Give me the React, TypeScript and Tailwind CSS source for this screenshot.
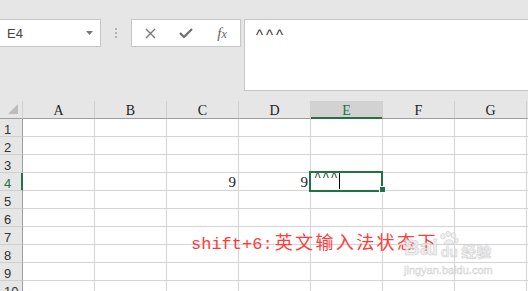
import React from "react";

const cols = ["A", "B", "C", "D", "E", "F", "G"];
const rows = [1, 2, 3, 4, 5, 6, 7, 8, 9, 10];

function Cell({ col, row }: { col: string; row: number }) {
  let content: React.ReactNode = null;
  if (row === 4 && (col === "C" || col === "D")) {
    content = (
      <div className="h-full text-right pr-[2px] pt-[1px] leading-[17px] text-[15px] text-[#222] font-['Liberation_Serif',serif]">
        9
      </div>
    );
  }
  if (row === 4 && col === "E") {
    content = (
      <div className="h-full flex items-start pl-[3px] font-['Liberation_Mono',monospace] text-[12px] text-[#222]">
        <span className="leading-[11px] tracking-[1px]">^^^</span>
        <div className="w-px h-[16px] bg-black" />
      </div>
    );
  }
  return (
    <div className="w-[72px] h-[18px] shrink-0 bg-white border-r border-b border-[#d4d4d4]">
      {content}
    </div>
  );
}

export default function App() {
  return (
    <div className="relative w-[528px] h-[291px] overflow-hidden bg-[#e6e6e6] font-['Liberation_Sans',sans-serif]">
      {/* Formula bar area */}
      <div className="flex items-start h-[101px] pt-[19px]">
        <div className="w-[101px] h-[28px] shrink-0 bg-white border-y border-r border-[#c6c6c6] flex items-center justify-between pl-[7px] pr-[7px]">
          <span className="text-[13px] text-[#444] leading-none pt-[1px]">E4</span>
          <svg width="7" height="4" viewBox="0 0 7 4">
            <polygon points="0,0 7,0 3.5,4" fill="#777" />
          </svg>
        </div>
        <div className="ml-[14px] mt-[9px] flex flex-col gap-[2px] shrink-0">
          <div className="w-[2px] h-[2px] bg-[#b4b4b4]" />
          <div className="w-[2px] h-[2px] bg-[#b4b4b4]" />
          <div className="w-[2px] h-[2px] bg-[#b4b4b4]" />
        </div>
        <div className="ml-[14px] w-[110px] h-[28px] shrink-0 bg-white border border-[#c6c6c6] flex">
          <div className="w-[36px] h-full flex items-center justify-center">
            <svg width="11" height="11" viewBox="0 0 11 11">
              <path d="M1 1 L10 10 M10 1 L1 10" stroke="#777" strokeWidth="1.4" />
            </svg>
          </div>
          <div className="w-[36px] h-full flex items-center justify-center">
            <svg width="14" height="10" viewBox="0 0 14 10">
              <path d="M1 5 L5 9 L13 1" stroke="#6e6e6e" strokeWidth="2.2" fill="none" />
            </svg>
          </div>
          <div className="w-[36px] h-full flex items-center justify-center">
            <span className="italic font-['Liberation_Serif',serif] text-[15px] text-[#666] leading-none">
              f<span className="text-[12px]">x</span>
            </span>
          </div>
        </div>
        <div className="ml-[3px] w-[290px] h-[72px] shrink-0 bg-white border border-[#c6c6c6] pl-[11px] pt-[3px]">
          <span className="text-[15px] leading-[18px] tracking-[3px] text-[#333]">^^^</span>
        </div>
      </div>

      {/* Grid */}
      <div className="flex flex-col">
        <div className="flex h-[18px]">
          <div className="relative w-[23px] h-[18px] shrink-0 border-r border-b border-r-[#cfcfcf] border-b-[#9e9e9e]">
            <svg className="absolute left-[8px] top-[3px]" width="11" height="11" viewBox="0 0 11 11">
              <polygon points="10,0 10,10 0,10" fill="#bdbdbd" />
            </svg>
          </div>
          {cols.map((c) => (
            <div
              key={c}
              className={
                c === "E"
                  ? "w-[72px] h-[18px] shrink-0 border-r border-b border-r-[#cfcfcf] border-b-[#217346] shadow-[inset_0_-1px_0_#217346] bg-[#d2d2d2] text-center text-[14px] leading-[17px] pt-[1px] text-[#217346] font-['Liberation_Serif',serif]"
                  : "w-[72px] h-[18px] shrink-0 border-r border-b border-r-[#cfcfcf] border-b-[#9e9e9e] text-center text-[14px] leading-[17px] pt-[1px] text-[#222] font-['Liberation_Serif',serif]"
              }
            >
              {c}
            </div>
          ))}
          <div className="flex-1 h-[18px] border-b border-b-[#9e9e9e]" />
        </div>
        {rows.map((r) => (
          <div key={r} className="flex h-[18px]">
            <div
              className={
                r === 4
                  ? "w-[23px] h-[18px] shrink-0 border-r border-b border-r-[#217346] border-b-[#cfcfcf] shadow-[inset_-1px_0_0_#217346] pl-[4px] pt-[2px] text-[13px] leading-[17px] text-[#217346]"
                  : "w-[23px] h-[18px] shrink-0 border-r border-b border-r-[#9e9e9e] border-b-[#cfcfcf] pl-[4px] pt-[2px] text-[13px] leading-[17px] text-[#333]"
              }
            >
              {r}
            </div>
            {cols.map((c) => (
              <Cell key={c} col={c} row={r} />
            ))}
            <div className="flex-1 h-[18px] bg-white border-b border-[#d4d4d4]" />
          </div>
        ))}
      </div>

      {/* Selection */}
      <div className="absolute left-[309px] top-[171px] w-[74px] h-[21px] border-2 border-[#217346]" />
      <div className="absolute left-[379px] top-[186px] w-[7px] h-[7px] bg-[#217346] border border-white" />

      {/* Red annotation */}
      <div className="absolute left-[191px] top-[231px] flex items-baseline text-[#ff3b3b]">
        <span className="font-['Liberation_Mono',monospace] text-[17px] leading-[20px]">shift+6:</span>
        <span className="ml-[2px] font-['Noto_Sans_CJK_SC',sans-serif] text-[18px] leading-[20px] tracking-[2.4px]">
          英文输入法状态下
        </span>
      </div>

      {/* Watermark */}
      <div className="absolute left-[404px] top-[231px] flex flex-col opacity-80">
        <div className="flex items-end">
          <span className="font-['Liberation_Sans',sans-serif] font-bold text-[22px] leading-[22px] text-[#ececec] [-webkit-text-stroke:0.6px_#c4c4c4]">
            Bai
          </span>
          <div className="flex flex-col items-center ml-[1px]">
            <svg width="20" height="14" viewBox="0 0 22 16">
              <g fill="#ececec" stroke="#c4c4c4" strokeWidth="0.8">
                <ellipse cx="4" cy="6" rx="2.6" ry="3.2" />
                <ellipse cx="10" cy="3.4" rx="2.6" ry="3" />
                <ellipse cx="16" cy="5" rx="2.6" ry="3.2" />
                <ellipse cx="19.5" cy="11" rx="2.2" ry="2.8" />
                <path d="M5 15 C6 11 9 10 12 10 C14 10 16 12 16 15 Z" />
              </g>
            </svg>
            <span className="font-['Liberation_Sans',sans-serif] font-bold text-[14px] leading-[14px] text-[#ececec] [-webkit-text-stroke:0.5px_#c4c4c4]">
              du
            </span>
          </div>
          <span className="ml-[2px] font-['Noto_Sans_CJK_SC',sans-serif] font-bold text-[15px] leading-[16px] text-[#ececec] [-webkit-text-stroke:0.5px_#c4c4c4]">
            经验
          </span>
        </div>
        <span className="mt-[5px] font-['Liberation_Sans',sans-serif] text-[11px] leading-[12px] text-[#ececec] [-webkit-text-stroke:0.4px_#c4c4c4]">
          jingyan.baidu.com
        </span>
      </div>
    </div>
  );
}
